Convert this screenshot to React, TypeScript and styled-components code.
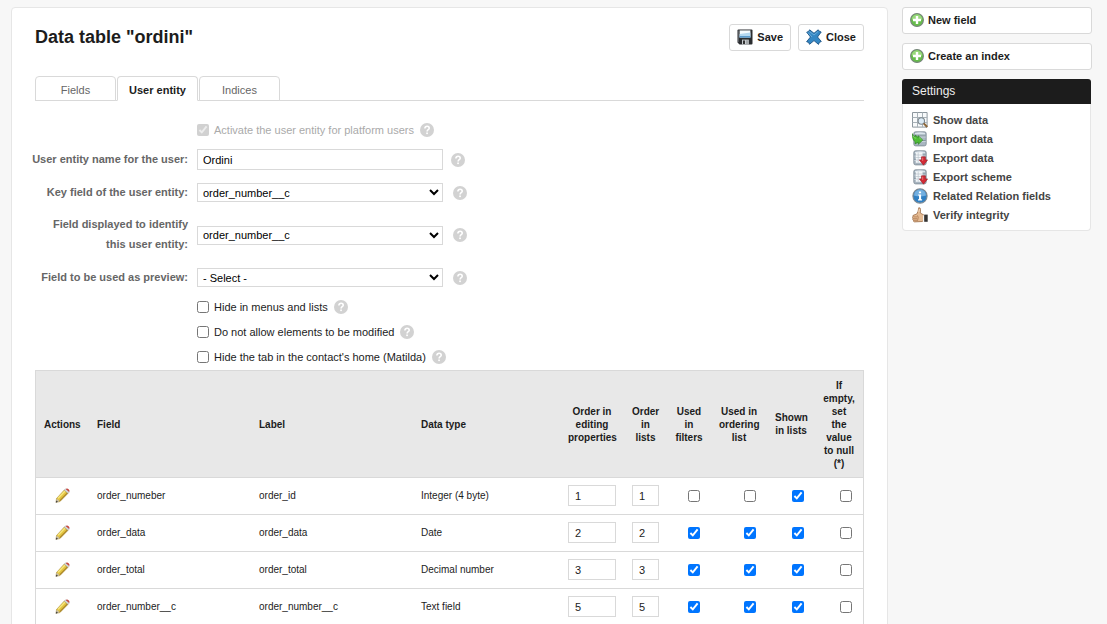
import React, { useState } from 'react';
import styled, { createGlobalStyle, css } from 'styled-components';

const Global = createGlobalStyle`
  *, *::before, *::after { box-sizing: border-box; }
  html { scrollbar-width: none; }
  body {
    margin: 0;
    background: #f7f7f7;
    color: #1c1c1c;
    font: 11px/20px "Liberation Sans", Arial, sans-serif;
  }
  button, input, select { font: inherit; color: inherit; }
`;

const Page = styled.div`
  display: grid;
  grid-template-columns: minmax(0, 1fr) 190px;
  gap: 14px;
  align-items: start;
  padding: 7px 15px 24px 11px;
`;

const Card = styled.main`
  padding: 16px 23px 24px;
  background: #fff;
  border: 1px solid #e6e6e6;
  border-radius: 4px;
`;

const TitleBar = styled.header`
  display: flex;
  align-items: center;
  justify-content: space-between;
`;

const Title = styled.h1`
  margin: 0;
  font-size: 18px;
  line-height: 27px;
  font-weight: bold;
`;

const ButtonGroup = styled.div`
  display: flex;
  gap: 7px;
`;

const PushButton = styled.button`
  display: flex;
  align-items: center;
  gap: 4px;
  height: 27px;
  padding: 0 7px 1px;
  background: #fff;
  border: 1px solid #d9d9d9;
  border-radius: 3px;
  font-weight: bold;
  cursor: pointer;
`;

const Tabs = styled.div`
  display: flex;
  gap: 1px;
  margin-top: 25px;
  border-bottom: 1px solid #d9d9d9;
`;

const Tab = styled.button<{ $active: boolean }>`
  width: 81px;
  height: 25px;
  padding: 3px 0 0;
  margin-bottom: -1px;
  background: #fff;
  border: 1px solid #d9d9d9;
  border-radius: 4px 4px 0 0;
  color: #666;
  cursor: pointer;
  ${({ $active }) =>
    $active &&
    css`
      border-bottom-color: #fff;
      color: #1c1c1c;
      font-weight: bold;
    `}
`;

const Form = styled.form`
  margin: 0;
  padding-top: 15px;
`;

const FieldRow = styled.div`
  display: grid;
  grid-template-columns: 153px minmax(0, 1fr);
  column-gap: 9px;
  align-items: center;
  min-height: 33px;
  padding: 5px 0;
`;

const FieldLabel = styled.label`
  justify-self: end;
  width: max-content;
  max-width: 157px;
  padding-bottom: 2px;
  color: #666;
  font-weight: bold;
  text-align: right;
`;

const Control = styled.div<{ $gap: number }>`
  display: flex;
  align-items: center;
  gap: ${({ $gap }) => $gap}px;
`;

const TextInput = styled.input`
  width: 246px;
  height: 21px;
  padding: 1px 5px 0;
  border: 1px solid #d9d9d9;
  background: #fff;
  color: #000;
`;

const Select = styled.select`
  width: 246px;
  height: 19px;
  padding: 0 0 0 1px;
  border: 1px solid #d9d9d9;
  border-radius: 0;
  background: #fff;
  color: #000;
`;

const CheckRow = styled.div<{ $tall?: boolean }>`
  display: flex;
  align-items: center;
  gap: 6px;
  height: ${({ $tall }) => ($tall ? 27 : 25)}px;
  padding-left: 162px;
`;

const CheckLabel = styled.label<{ $muted?: boolean }>`
  display: flex;
  align-items: center;
  gap: 5px;
  color: ${({ $muted }) => ($muted ? '#aaa' : '#1c1c1c')};
`;

const Checkbox = styled.input.attrs({ type: 'checkbox' })`
  width: 12px;
  height: 12px;
  margin: 1px 0 0;
`;

const FieldsTable = styled.table`
  width: 100%;
  margin-top: 1px;
  table-layout: fixed;
  border-collapse: separate;
  border-spacing: 0;
  border: 1px solid #d9d9d9;
  font-size: 10px;
  line-height: 13px;
`;

const HeadCell = styled.th<{ $center?: boolean }>`
  height: 107px;
  padding: 0 8px;
  background: #e8e8e8;
  border-bottom: 1px solid #d9d9d9;
  text-align: ${({ $center }) => ($center ? 'center' : 'left')};
  vertical-align: middle;
`;

const Cell = styled.td<{ $align?: 'center' | 'right' }>`
  height: 37px;
  padding: 0 8px 1px;
  border-bottom: 1px solid #d9d9d9;
  text-align: ${({ $align }) => $align ?? 'left'};
  vertical-align: middle;

  ${Checkbox} {
    display: inline-block;
    margin: 0 3px;
    vertical-align: middle;
  }
`;

const OrderInput = styled.input`
  display: block;
  width: 100%;
  height: 21px;
  padding: 0 6px;
  border: 1px solid #d9d9d9;
  font-size: 11px;
`;

const IconButton = styled.button`
  display: inline-flex;
  padding: 0;
  border: 0;
  background: none;
  vertical-align: middle;
  cursor: pointer;
`;

const Side = styled.aside`
  display: grid;
  gap: 9px;
`;

const Panel = styled.section`
  margin-right: 1px;
  background: #fff;
  border: 1px solid #e6e6e6;
  border-top: 0;
  border-radius: 4px;
`;

const PanelTitle = styled.h2`
  margin: 0 -1px;
  padding: 0 10px;
  height: 25px;
  border-radius: 3px 3px 0 0;
  background: #1c1c1c;
  color: #eee;
  font-size: 12px;
  line-height: 25px;
  font-weight: normal;
`;

const Links = styled.ul`
  margin: 0;
  padding: 6px 9px;
  list-style: none;
`;

const SideLink = styled.a`
  display: flex;
  align-items: center;
  gap: 5px;
  height: 19px;
  color: #444;
  font-weight: bold;
  text-decoration: none;
`;

const Glyph = styled.svg.attrs({ 'aria-hidden': true })`
  flex: none;
  display: block;
`;

const HelpIcon = () => (
  <Glyph width="14" height="14" viewBox="0 0 14 14">
    <circle cx="7" cy="7" r="7" fill="#d2d2d2" />
    <path d="M4.9 5.5C4.9 4.1 5.8 3.3 7.1 3.3s2.1.8 2.1 1.9c0 1.5-2.1 1.6-2.1 3.3" fill="none" stroke="#fff" strokeWidth="1.6" />
    <rect x="6.2" y="9.5" width="1.7" height="1.6" fill="#fff" />
  </Glyph>
);

const SaveIcon = () => (
  <Glyph width="16" height="16" viewBox="0 0 16 16">
    <path d="M.5 1.5q0-1 1-1h13q1 0 1 1v13q0 1-1 1h-12l-2-2z" fill="#2b2d30" />
    <path d="M1.4 1.4v11.8" stroke="#707479" strokeWidth=".7" />
    <path d="M2.6 1.4h10.8v7H2.6z" fill="#f6fbff" />
    <path d="M2.6 5L13.4 3.6v5H2.6z" fill="#b4d8f1" />
    <path d="M2.6 7h10.8v1.6H2.6z" fill="#5b9bcd" />
    <path d="M5 10.6h6.8v4.9H5z" fill="#c7cbce" />
    <path d="M6 11.4h2v3.6H6z" fill="#333" />
    <path d="M9 11.2h2v3.8H9z" fill="#a4a8ab" />
  </Glyph>
);

const CloseIcon = () => (
  <Glyph width="16" height="16" viewBox="0 0 16 16">
    <path
      d="M3.6.8L8 4.3 12.2.8l1 1.4 2 .8L11.5 8l3.8 4.5-2 .9-.8 2L8 11.6l-4.5 3.7-.9-1.9-2-.7L4.5 8 .7 3.2l2-.8z"
      fill="#3487c4"
      stroke="#1b5285"
      strokeWidth=".9"
      strokeLinejoin="round"
    />
    <path d="M3.3 2.4L8 6l4.3-3.7M2 3.5L6 8" fill="none" stroke="#76b5df" strokeWidth=".8" />
  </Glyph>
);

const AddIcon = () => (
  <Glyph width="14" height="14" viewBox="0 0 14 14">
    <circle cx="7" cy="7" r="6.4" fill="#66bd4b" stroke="#76847a" strokeWidth="1.1" />
    <path d="M1.7 6.5a5.3 5.3 0 0 1 10.6 0q-5.3 1.8-10.6 0z" fill="#98d87b" />
    <path d="M5.8 3h2.4v2.8H11v2.4H8.2V11H5.8V8.2H3V5.8h2.8z" fill="#fff" />
  </Glyph>
);

const PencilIcon = () => (
  <Glyph width="15" height="15" viewBox="0 0 16 16">
    <path d="M1.6 11.2L9.9 2.2l4 3.5-8.7 8.8-4.1.7z" fill="#e3c440" stroke="#99792b" strokeWidth=".6" strokeLinejoin="round" />
    <path d="M3.2 11L10.7 3.3" stroke="#f6e67e" strokeWidth="1.6" />
    <path d="M5 13.7l8.3-8.4" stroke="#a8832b" strokeWidth="1.1" />
    <path d="M9.9 2.2l1.5-1.5 4 3.4-1.5 1.6z" fill="#d5d8da" stroke="#92979a" strokeWidth=".4" />
    <path d="M11.9.8q1.2-.8 2.6.4t.9 2.4l-.6.4-3.2-2.8z" fill="#c7473f" />
    <path d="M1.7 11.2l3.4 3-4.1 1.2z" fill="#c9bfa8" />
    <path d="M1.3 13.2l1.9 1.5-2.4.9z" fill="#444" />
  </Glyph>
);

const GridIcon = () => (
  <Glyph width="16" height="16" viewBox="0 0 16 16">
    <path d="M.5.5h14.6v14.6H.5z" fill="#f8fafb" stroke="#8d979e" />
    <path d="M5.5.5v14.6M10.5.5v14.6M.5 5.5h14.6M.5 10.5h14.6" stroke="#a9b2b8" fill="none" />
    <circle cx="9.3" cy="9" r="3.2" fill="#dcebf6" stroke="#7c868d" strokeWidth="1.1" />
    <path d="M11.7 11.4l3.5 3.6" stroke="#8c6638" strokeWidth="2" />
  </Glyph>
);

const DatabaseShape = () => (
  <>
    <path d="M1.8 2.5Q1.8.8 3.5.8h9q1.7 0 1.7 1.7v10.6q0 1.8-1.8 1.8H3.6q-1.8 0-1.8-1.8z" fill="#a9b6c1" stroke="#7c8993" strokeWidth=".8" />
    <path d="M3 2q5-1.4 10 0v1.3H3z" fill="#dce5ec" />
    <path d="M2.3 5h11.4M2.3 9.5h11.4" stroke="#7f8d98" strokeWidth=".8" />
    <path d="M2.3 6h11.4M2.3 10.5h11.4" stroke="#d1dbe2" strokeWidth=".8" />
  </>
);

const ImportIcon = () => (
  <Glyph width="16" height="16" viewBox="0 0 16 16">
    <DatabaseShape />
    <path
      d="M.5 2.7q.3 3.2 2.6 3.3V4l3.2 2.6V4.8l4.4 4.3-4.4 4.2v-2.2l-3.2 1.8v-2.2Q.2 9 .5 2.7z"
      fill="#4fbd36"
      stroke="#2b8420"
      strokeWidth=".7"
      strokeLinejoin="round"
    />
    <path d="M1.2 5q.7 2.2 3 2.3M7 6.4l2.6 2.5" stroke="#8be06d" strokeWidth=".8" fill="none" />
  </Glyph>
);

const ExportIcon = () => (
  <Glyph width="16" height="16" viewBox="0 0 16 16">
    <DatabaseShape />
    <path d="M3.8 2.5h6.7v10.3H3.8z" fill="#f4f7f9" />
    <path d="M3.8 5h6.7M3.8 7.5h6.7M3.8 10h6.7M6.2 2.5v10.3" stroke="#b4bec6" strokeWidth=".6" />
    <path d="M9.5 6.8h3.9v3.1h2.2l-4.1 5.3-4.1-5.3h2.1z" fill="#d32a35" stroke="#971c25" strokeWidth=".6" strokeLinejoin="round" />
    <path d="M10.7 7.7v3.2" stroke="#f0787b" strokeWidth=".9" />
  </Glyph>
);

const InfoIcon = () => (
  <Glyph width="16" height="16" viewBox="0 0 16 16">
    <circle cx="8" cy="8" r="7.1" fill="#2f7fc3" stroke="#7b8790" strokeWidth="1.1" />
    <path d="M2 7.5a6 6 0 0 1 12 0q-6 1.7-12 0z" fill="#72afe0" />
    <path d="M6.9 3.4h2.2v1.9H6.9zM6.1 6.5h3v4.7h1v1.2H6v-1.2h1V7.6h-.9z" fill="#fff" />
  </Glyph>
);

const ThumbIcon = () => (
  <Glyph width="16" height="16" viewBox="0 0 16 16">
    <path
      d="M6.8.7q1.8-.2 1.7 2L8.3 6l3.8 2.2v5l-2 1.3-7.6.4q-1.4-.3-1.1-1.6-1-.6-.5-1.7-.8-.9 0-1.8-.5-1.5 1.1-1.8L4.8 7 6.1 4.2z"
      fill="#e5bb93"
      stroke="#9b6b45"
      strokeWidth=".8"
      strokeLinejoin="round"
    />
    <path d="M1.5 9.9h3.9M1.2 11.7h4M1.7 13.3h3.7M5.5 8.3q1.5 1.7 0 5.5" stroke="#a9744c" strokeWidth=".7" fill="none" />
    <path d="M7.3 2L6.8 5" stroke="#f8dfc5" strokeWidth=".9" />
    <path d="M11 8.4l1.3-.4v6l-1.3.4z" fill="#f4f4f4" />
    <path d="M12.2 7.6h3.5v7.2h-3.5z" fill="#333" />
  </Glyph>
);

const tabs = ['Fields', 'User entity', 'Indices'];

const selects = [
  { id: 'key', label: 'Key field of the user entity:', options: ['order_number__c', 'order_data', 'order_total'] },
  { id: 'display', label: 'Field displayed to identify this user entity:', options: ['order_number__c', 'order_data', 'order_total'] },
  { id: 'preview', label: 'Field to be used as preview:', options: ['- Select -', 'order_number__c'] },
];

const flags = ['Hide in menus and lists', 'Do not allow elements to be modified', "Hide the tab in the contact's home (Matilda)"];

const flagColumns = ['Used in filters', 'Used in ordering list', 'Shown in lists', 'If empty, set the value to null (*)'];

const columnWidths = [53, 162, 162, undefined, 64, 43, 44, 56, 48, 48];

const rows = [
  { field: 'order_numeber', label: 'order_id', type: 'Integer (4 byte)', order: '1', flags: [false, false, true, false] },
  { field: 'order_data', label: 'order_data', type: 'Date', order: '2', flags: [true, true, true, false] },
  { field: 'order_total', label: 'order_total', type: 'Decimal number', order: '3', flags: [true, true, true, false] },
  { field: 'order_number__c', label: 'order_number__c', type: 'Text field', order: '5', flags: [true, true, true, false] },
];

const links = [
  { label: 'Show data', Icon: GridIcon },
  { label: 'Import data', Icon: ImportIcon },
  { label: 'Export data', Icon: ExportIcon },
  { label: 'Export scheme', Icon: ExportIcon },
  { label: 'Related Relation fields', Icon: InfoIcon },
  { label: 'Verify integrity', Icon: ThumbIcon },
];

export default function App() {
  const [active, setActive] = useState('User entity');

  return (
    <>
      <Global />
      <Page>
        <Card>
          <TitleBar>
            <Title>Data table "ordini"</Title>
            <ButtonGroup>
              <PushButton type="submit" form="entity"><SaveIcon />Save</PushButton>
              <PushButton type="button"><CloseIcon />Close</PushButton>
            </ButtonGroup>
          </TitleBar>

          <Tabs role="tablist">
            {tabs.map((name) => (
              <Tab key={name} type="button" role="tab" aria-selected={name === active} $active={name === active} onClick={() => setActive(name)}>
                {name}
              </Tab>
            ))}
          </Tabs>

          <Form id="entity" onSubmit={(e) => e.preventDefault()}>
            <CheckRow $tall>
              <CheckLabel $muted>
                <Checkbox defaultChecked disabled />
                Activate the user entity for platform users
              </CheckLabel>
              <HelpIcon />
            </CheckRow>

            <FieldRow>
              <FieldLabel htmlFor="name">User entity name for the user:</FieldLabel>
              <Control $gap={8}>
                <TextInput id="name" type="text" defaultValue="Ordini" />
                <HelpIcon />
              </Control>
            </FieldRow>

            {selects.map(({ id, label, options }) => (
              <FieldRow key={id}>
                <FieldLabel htmlFor={id}>{label}</FieldLabel>
                <Control $gap={10}>
                  <Select id={id}>
                    {options.map((option) => <option key={option}>{option}</option>)}
                  </Select>
                  <HelpIcon />
                </Control>
              </FieldRow>
            ))}

            {flags.map((flag) => (
              <CheckRow key={flag}>
                <CheckLabel>
                  <Checkbox />
                  {flag}
                </CheckLabel>
                <HelpIcon />
              </CheckRow>
            ))}

            <FieldsTable>
              <colgroup>
                {columnWidths.map((width, i) => <col key={i} width={width} />)}
              </colgroup>
              <thead>
                <tr>
                  <HeadCell>Actions</HeadCell>
                  <HeadCell>Field</HeadCell>
                  <HeadCell>Label</HeadCell>
                  <HeadCell>Data type</HeadCell>
                  <HeadCell $center>Order in editing properties</HeadCell>
                  <HeadCell $center>Order in lists</HeadCell>
                  {flagColumns.map((name) => <HeadCell key={name} $center>{name}</HeadCell>)}
                </tr>
              </thead>
              <tbody>
                {rows.map((row) => (
                  <tr key={row.field}>
                    <Cell $align="center">
                      <IconButton type="button" aria-label={`Edit ${row.field}`}><PencilIcon /></IconButton>
                    </Cell>
                    <Cell>{row.field}</Cell>
                    <Cell>{row.label}</Cell>
                    <Cell>{row.type}</Cell>
                    <Cell><OrderInput type="text" aria-label={`Order in editing properties, ${row.field}`} defaultValue={row.order} /></Cell>
                    <Cell><OrderInput type="text" aria-label={`Order in lists, ${row.field}`} defaultValue={row.order} /></Cell>
                    {row.flags.map((on, i) => (
                      <Cell key={flagColumns[i]} $align="right">
                        <Checkbox defaultChecked={on} aria-label={`${flagColumns[i]}, ${row.field}`} />
                      </Cell>
                    ))}
                  </tr>
                ))}
              </tbody>
            </FieldsTable>
          </Form>
        </Card>

        <Side>
          <PushButton type="button"><AddIcon />New field</PushButton>
          <PushButton type="button"><AddIcon />Create an index</PushButton>
          <Panel>
            <PanelTitle>Settings</PanelTitle>
            <Links>
              {links.map(({ label, Icon }) => (
                <li key={label}>
                  <SideLink href="#"><Icon />{label}</SideLink>
                </li>
              ))}
            </Links>
          </Panel>
        </Side>
      </Page>
    </>
  );
}
